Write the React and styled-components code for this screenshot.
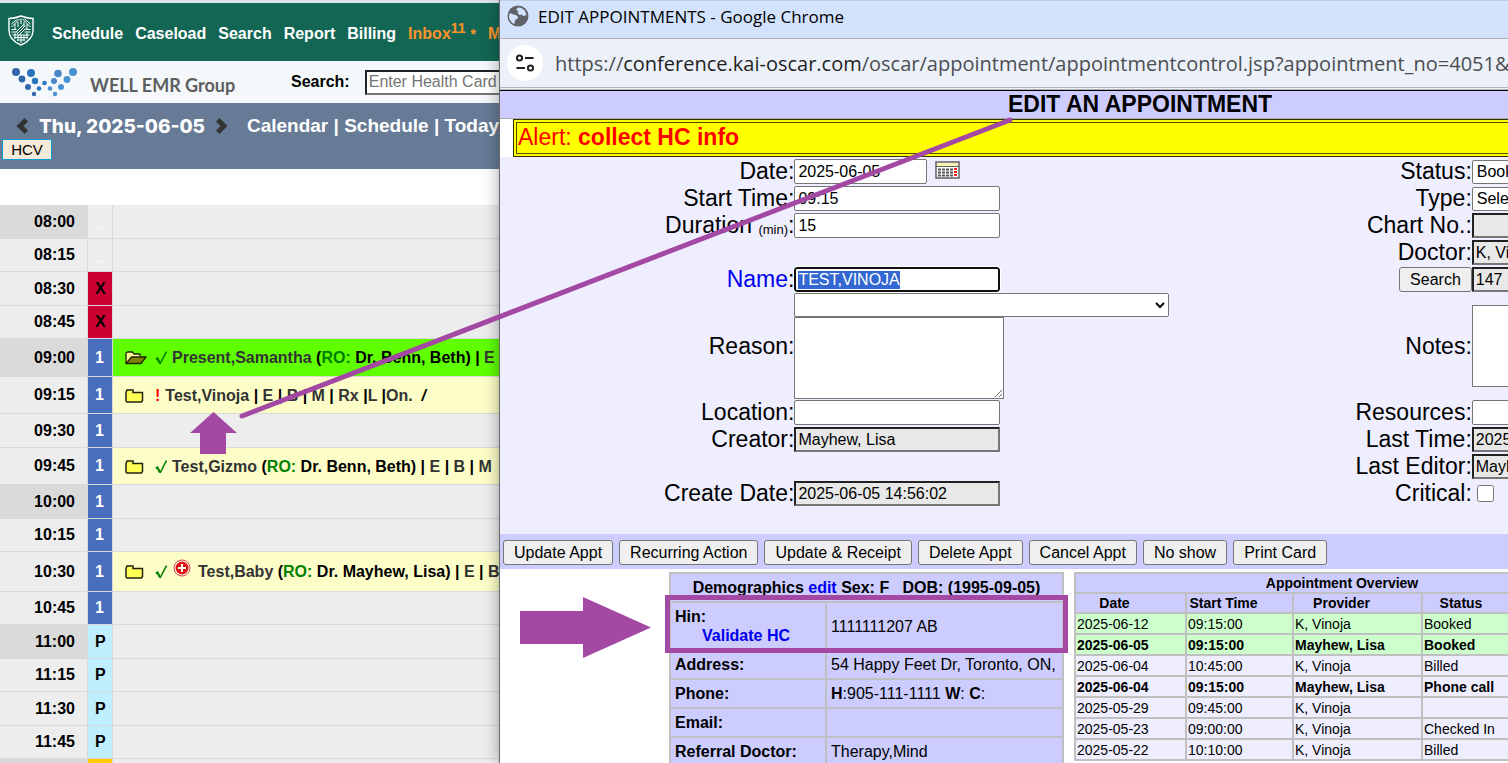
import React, { useEffect, useRef } from "react";
import styled, { createGlobalStyle, css } from "styled-components";

const GlobalStyle = createGlobalStyle`
   * {
      box-sizing: border-box;
   }

   body {
      margin: 0;
      background-color: #ffffff;
      color: #000000;
      font-family: "Liberation Sans", Arial, sans-serif;
      font-size: 16px;
   }

   a {
      color: inherit;
      text-decoration: none;
   }

   input, select, textarea, button {
      font-family: inherit;
      font-size: 16px;
      margin: 0;
   }
`;

const Desktop = styled.div`
   position: relative;
   display: grid;
   grid-template-columns: 125fr 252fr;
   height: 100vh;
   overflow: hidden;
`;

const SchedulePane = styled.div`
   min-width: 0;
   overflow: hidden;
   white-space: nowrap;
   background-color: #ededed;
   border-top: 3px solid #dde3f0;
`;

const NavBar = styled.nav`
   display: flex;
   align-items: center;
   gap: 12px;
   height: 58px;
   padding: 4px 0 0 8px;
   background-color: #146654;
   color: #ffffff;
   font-weight: bold;

   svg {
      flex: none;
      margin: 0 6px 8px 0;
   }
`;

const NavAlert = styled.a`
   color: #ff9429;

   sup {
      font-size: 14px;
      line-height: 0;
   }

   small {
      font-size: 14px;
      margin-left: 5px;
   }
`;

const SearchBar = styled.div`
   display: flex;
   align-items: center;
   height: 42px;
   padding-left: 11px;
   background-color: #f4f8fb;

   svg {
      flex: none;
   }
`;

const BrandName = styled.span`
   flex: none;
   width: 213px;
   padding: 6px 0 0 12px;
   color: #5d5f61;
   font-family: Lato, sans-serif;
   font-size: 18px;
   font-weight: bold;
`;

const SearchLabel = styled.label`
   margin-right: 15px;
   font-weight: bold;
`;

const SearchInput = styled.input`
   flex: none;
   width: 190px;
   height: 25px;
   padding: 0 2px;
   border: 2px inset #767676;

   &::placeholder {
      color: #757575;
   }
`;

const DateBar = styled.div`
   height: 66px;
   padding: 11px 0 0 2px;
   background-color: #677b96;
   color: #ffffff;
   font-size: 19px;
   font-weight: bold;
`;

const DateRow = styled.div`
   display: flex;
   align-items: center;
   height: 24px;
   padding-left: 13px;

   svg {
      flex: none;
   }
`;

const CurrentDate = styled.span`
   padding: 0 10px;
   font-family: Inter, sans-serif;
   font-size: 19px;
   font-weight: 800;
`;

const DateLinks = styled.span`
   margin-left: 18px;
`;

const HcvButton = styled.button`
   display: block;
   width: 50px;
   height: 21px;
   margin-top: 1px;
   padding: 0;
   border: 1px solid #0f9ad0;
   background-color: #f4ead9;
   font-size: 15px;
   line-height: 18px;
`;

const DayTable = styled.table`
   width: 100%;
   margin-top: 36px;
   border-collapse: separate;
   border-spacing: 0;
   table-layout: fixed;
   font-weight: bold;
   box-shadow: 0 -36px 0 #ffffff;
`;

const SlotRow = styled.tr`
   height: ${props => props.$height}px;
`;

const TimeCell = styled.th`
   width: 88px;
   padding: 0 12px 0 0;
   border-right: 1px solid #d9d9d9;
   border-bottom: 1px solid #d9d9d9;
   background-color: ${props => (props.$hour ? "#dadada" : "#ededed")};
   text-align: right;
`;

const codeColors = {
   _: { background: "#ededed", color: "#ffffff" },
   X: { background: "#cc0033", color: "#000000" },
   1: { background: "#486ebd", color: "#ffffff" },
   P: { background: "#bfefff", color: "#000000" },
   L: { background: "#ffcc00", color: "#ffcc00" }
};

const CodeCell = styled.td`
   width: 25px;
   padding: 0 0 0 7px;
   border-right: 1px solid #d9d9d9;
   border-bottom: 1px solid #d9d9d9;
   background-color: ${props => codeColors[props.$code].background};
   color: ${props => codeColors[props.$code].color};
`;

const slotColors = {
   free: "#ededed",
   here: "#5fff00",
   booked: "#fdfec7"
};

const SlotCell = styled.td`
   padding: 0 0 0 12px;
   border-bottom: 1px solid #d9d9d9;
   background-color: ${props => slotColors[props.$kind]};
   overflow: hidden;
`;

const Appointment = styled.div`
   display: flex;
   align-items: center;
   padding-top: 1px;

   svg {
      flex: none;
   }
`;

const Marks = styled.span`
   display: flex;
   align-items: center;
   gap: 6px;
   margin: 0 5px 0 8px;
   color: #ff0000;
`;

const Patient = styled.a`
   color: #333333;
`;

const RosterTag = styled.span`
   color: #008000;
`;

const ChromeWindow = styled.section`
   position: relative;
   min-width: 0;
   overflow: hidden;
   clip-path: inset(0 0 0 -24px);
   background-color: #ffffff;
   border-top: 1px solid #c3cbe0;
   box-shadow: 0 0 0 1px #686868, 0 0 16px rgba(0, 0, 0, 0.4);
`;

const TitleBar = styled.header`
   display: flex;
   align-items: center;
   gap: 9px;
   height: 38px;
   padding: 0 0 7px 7px;
   border-bottom: 1px solid #b0b1b8;
   background-color: #d3e3fd;
   font-family: "Open Sans", sans-serif;
   font-size: 17px;
   white-space: nowrap;
`;

const AddressBar = styled.div`
   display: flex;
   align-items: center;
   gap: 12px;
   height: 51px;
   padding-left: 7px;
   border-bottom: 3px double #b4b6ba;
   background-color: #ecf1f9;
   font-family: "Open Sans", sans-serif;
   font-size: 20px;
   white-space: nowrap;
   color: #4b4e52;

   strong {
      color: #1f1f1f;
      font-weight: normal;
   }
`;

const SiteInfo = styled.button`
   display: flex;
   flex: none;
   align-items: center;
   justify-content: center;
   width: 36px;
   height: 36px;
   padding: 0;
   border: none;
   border-radius: 50%;
   background-color: #ffffff;
`;

const Document = styled.div`
   width: 127%;
   border-top: 1px solid #000000;
`;

const Headline = styled.h1`
   height: 28px;
   margin: 0;
   border-bottom: 1px solid #a9a9a9;
   background-color: #ccccff;
   font-size: 23px;
   line-height: 26px;
   text-align: center;
`;

const AlertBox = styled.div`
   margin-left: 13px;
   padding: 2px;
   border: 1px solid #303000;
   background-color: #ffff00;
   color: #ff0000;
   font-size: 23px;
   line-height: 28px;

   p {
      margin: 0;
      padding: 0 0 2px 1px;
      border: 1px solid #505000;
   }
`;

const FormArea = styled.form`
   display: grid;
   grid-template-columns: 53fr 47fr;
   padding: 1px 0 27px;
   background-color: #eeeeff;
`;

const FormColumn = styled.div`
   display: grid;
   grid-template-columns: ${props => props.$columns};
   grid-template-rows: repeat(5, 27px) 106px repeat(4, 27px);
`;

const FieldLabel = styled.div`
   display: flex;
   align-items: center;
   justify-content: flex-end;
   font-size: 23px;
   white-space: nowrap;

   small {
      padding-top: 7px;
      font-size: 13px;
   }

   a {
      color: #0000ee;
   }
`;

const Field = styled.div`
   display: flex;
   flex-direction: ${props => (props.$stack ? "column" : "row")};
   align-items: ${props => (props.$stack ? "flex-start" : "center")};

   svg {
      margin: 0 0 4px 8px;
   }
`;

const TextInput = styled.input`
   width: ${props => (props.$short ? 133 : 206)}px;
   height: 25px;
   padding: 0 3px;
   border: 1px solid #767676;
   border-radius: 2px;
   background-color: #ffffff;

   &:read-only {
      padding: 0 2px;
      border: 2px inset #767676;
      border-radius: 0;
      background-color: #e8e8e8;
   }

   &:focus {
      padding: 0 2px;
      border: 2px solid #101010;
      border-radius: 3px;
      outline: 1px solid #ffffff;
   }

   &::selection {
      background-color: #3367d1;
      color: #ffffff;
   }
`;

const SelectInput = styled.select`
   width: ${props => (props.$wide ? 375 : 160)}px;
   height: 24px;
   flex: none;
   padding: 0;
   border: 1px solid #767676;
   border-radius: 2px;
   background-color: #ffffff;
   color: #000000;
`;

const NoteArea = styled.textarea`
   width: 210px;
   height: 82px;
   border: 1px solid #767676;
`;

const CheckBox = styled.input`
   width: 17px;
   height: 17px;
   margin-left: 5px;
`;

const buttonLook = css`
   height: 25px;
   padding: 0 10px;
   border: 1px solid #767676;
   border-radius: 3px;
   background-color: #efefef;
   color: #000000;
   white-space: nowrap;
`;

const SearchButton = styled.button`
   ${buttonLook}
`;

const ActionBar = styled.div`
   display: flex;
   gap: 6px;
   height: 35px;
   padding: 6px 3px;
   background-color: #ccccff;
`;

const ActionButton = styled.button`
   ${buttonLook}
   flex: none;
`;

const Tables = styled.div`
   display: flex;
   align-items: flex-start;
   gap: 10px;
   padding: 3px 0 0 169px;
`;

const DemoTable = styled.table`
   flex: none;
   width: 395px;
   border-spacing: 2px;
   background-color: #c0c0c0;
   table-layout: fixed;
   white-space: nowrap;

   th,
   td {
      height: 27px;
      padding: 0 4px;
      background-color: #ccccff;
      text-align: left;
      line-height: 19px;
   }

   thead th {
      text-align: center;
      white-space: pre;
   }

   a {
      color: #0000ee;
   }
`;

const LabelCol = styled.col`
   width: 154px;
`;

const HinRow = styled.tr`
   th,
   td {
      height: 46px;
   }

   a {
      display: block;
      padding-left: 27px;
   }
`;

const OverviewTable = styled.table`
   flex: none;
   width: 536px;
   border-spacing: 2px;
   background-color: #c0c0c0;
   table-layout: fixed;
   font-size: 14px;

   th {
      height: 18px;
      padding: 0;
      background-color: #ccccff;
      line-height: 16px;
   }

   tr + tr th {
      padding-right: 32px;
      white-space: nowrap;
   }
`;

const OverviewCol = styled.col`
   width: ${props => props.$width}px;
`;

const OverviewRow = styled.tr`
   background-color: ${props => (props.$upcoming ? "#ccffcc" : "#eeeeff")};
   font-weight: ${props => (props.$own ? "bold" : "normal")};

   td {
      height: 19px;
      padding: 0 1px;
      line-height: 16px;
   }
`;

const Annotations = styled.svg`
   position: absolute;
   top: 0;
   left: 0;
   pointer-events: none;
`;

const slots = [
   { time: "08:00", code: "_", height: 34 },
   { time: "08:15", code: "_", height: 33 },
   { time: "08:30", code: "X", height: 34 },
   { time: "08:45", code: "X", height: 33 },
   {
      time: "09:00",
      code: "1",
      height: 38,
      kind: "here",
      patient: "Present,Samantha",
      doctor: "Dr. Benn, Beth",
      links: ["E"]
   },
   {
      time: "09:15",
      code: "1",
      height: 37,
      kind: "booked",
      patient: "Test,Vinoja",
      links: ["E", "B", "M", "Rx"],
      rest: true
   },
   { time: "09:30", code: "1", height: 34 },
   {
      time: "09:45",
      code: "1",
      height: 37,
      kind: "booked",
      patient: "Test,Gizmo",
      doctor: "Dr. Benn, Beth",
      links: ["E", "B", "M"]
   },
   { time: "10:00", code: "1", height: 34 },
   { time: "10:15", code: "1", height: 33 },
   {
      time: "10:30",
      code: "1",
      height: 40,
      kind: "booked",
      urgent: true,
      patient: "Test,Baby",
      doctor: "Dr. Mayhew, Lisa",
      links: ["E", "B"]
   },
   { time: "10:45", code: "1", height: 33 },
   { time: "11:00", code: "P", height: 34 },
   { time: "11:15", code: "P", height: 33 },
   { time: "11:30", code: "P", height: 34 },
   { time: "11:45", code: "P", height: 33 },
   { time: "12:00", code: "L", height: 34 }
];

const overview = [
   ["2025-06-12", "09:15:00", "K, Vinoja", "Booked"],
   ["2025-06-05", "09:15:00", "Mayhew, Lisa", "Booked"],
   ["2025-06-04", "10:45:00", "K, Vinoja", "Billed"],
   ["2025-06-04", "09:15:00", "Mayhew, Lisa", "Phone call"],
   ["2025-05-29", "09:45:00", "K, Vinoja", ""],
   ["2025-05-23", "09:00:00", "K, Vinoja", "Checked In"],
   ["2025-05-22", "10:10:00", "K, Vinoja", "Billed"]
];

const actions = [
   "Update Appt",
   "Recurring Action",
   "Update & Receipt",
   "Delete Appt",
   "Cancel Appt",
   "No show",
   "Print Card"
];

const brandDots = [
   [5, 5, 4, "#2f67ad"],
   [20, 6, 4, "#2a74bd"],
   [11, 12, 3.4, "#2f67ad"],
   [24, 14, 3.2, "#2a74bd"],
   [17, 20, 3, "#2f67ad"],
   [28, 21.5, 2.3, "#2a74bd"],
   [23, 27, 2.2, "#2f67ad"],
   [33.5, 16, 2.3, "#2a78c0"],
   [39, 21.5, 2.3, "#4a90d0"],
   [44, 27, 2.2, "#4a90d0"],
   [43, 14, 3, "#4a86c8"],
   [50, 20, 3, "#4a93d3"],
   [47, 6.5, 3.8, "#4a86c8"],
   [56, 12.5, 3.4, "#4a93d3"],
   [62, 5, 4, "#4a93d3"]
];

const Shield = () => (
   <svg width="26" height="31" viewBox="0 0 26 31" fill="none" stroke="#ffffff">
      <path
         d="M1 3.5C5 3.5 9 2.5 13 1c4 1.500 8 2.500 12 2.500v12C25 22 20 27 13 30 6 27 1 22 1 15.500Z"
         strokeWidth="1.400"
      />
      <path
         d="M3.500 9l6-5M3.500 12l8-8M22.500 9l-6-5M22.500 12l-8-8M13 3.500V9M10 7v5M16 7v5M7 9v5M19 9v5M3.500 14.500h5M17.500 14.500h5M3.500 17h6M16.500 17h6M4.500 20h17M6 22.500h14M9 25h8M8.500 16.500l7-7M9 19l8.500-8.500M10.500 20.500l7-7M13 20v8M10 20v6M16 20v6M7 18v6M19 18v6"
         strokeWidth="1"
      />
   </svg>
);

const BrandMark = () => (
   <svg width="67" height="30" viewBox="0 0 67 30">
      {brandDots.map(([cx, cy, r, fill]) => (
         <circle key={`${cx}-${cy}`} cx={cx} cy={cy} r={r} fill={fill} />
      ))}
   </svg>
);

const Chevron = ({ next }) => (
   <svg width="14" height="18" viewBox="0 0 14 18">
      <path
         d={
            next
               ? "M1 4.500L4.500 1l8 8-8 8L1 13.500 5.500 9Z"
               : "M13 4.500L9.500 1l-8 8 8 8 3.500-3.500L8.500 9Z"
         }
         fill="#333333"
      />
   </svg>
);

const Folder = ({ open }) => (
   <svg width="22" height="14" viewBox="0 0 22 14">
      {open ? (
         <g stroke="#222200" strokeWidth="1.300" strokeLinejoin="round">
            <path d="M1 12.500V2L2.500 1h5L9 3h6v3" fill="#ffff99" />
            <path d="M1 12.500L6.500 6H21l-5 6.500Z" fill="#808000" />
         </g>
      ) : (
         <path
            d="M1 3.500L2 1h6v2.500h9.500v8L16.500 13H2L1 12Z"
            fill="#ffff55"
            stroke="#222211"
            strokeWidth="1.500"
         />
      )}
   </svg>
);

const Tick = () => (
   <svg width="12" height="14" viewBox="0 0 12 14" fill="none" stroke="#008000">
      <path d="M1 8.500l1.500-1 2.500 5" strokeWidth="2.200" />
      <path d="M5 13L11.500 .5" strokeWidth="1.600" />
   </svg>
);

const Urgent = () => (
   <svg width="20" height="26" viewBox="0 0 20 26">
      <circle cx="9" cy="9" r="8" fill="#ffffff" stroke="#e04040" />
      <circle cx="9" cy="9" r="6.500" fill="#e01414" />
      <path d="M9 5v8M5 9h8" stroke="#ffffff" strokeWidth="2" />
   </svg>
);

const Globe = () => (
   <svg width="22" height="22" viewBox="0 0 22 22">
      <circle cx="11" cy="11" r="10.500" fill="#5f6368" />
      <path
         d="M3 8c3 1 4 2 6 2l2 2c0 2-2 2-3 3l-.5 4C4 18 2 14 2 11ZM11 2.500c3 0 5 1 7 3.500l1.500 4-3 1-2-1.500-2 .5-2-2 1-2-2.500-1Z"
         fill="#d3e3fd"
      />
   </svg>
);

const Tune = () => (
   <svg width="20" height="18" viewBox="0 0 20 18" fill="none" stroke="#202124">
      <circle cx="4.500" cy="4" r="2.600" strokeWidth="2" />
      <circle cx="15.500" cy="14" r="2.600" strokeWidth="2" />
      <path d="M10 4h8.500M1.500 14H10" strokeWidth="2" />
   </svg>
);

const CalendarIcon = () => (
   <svg width="25" height="18" viewBox="0 0 25 18">
      <rect x="1" y="1" width="23" height="16" fill="#ffffff" stroke="#606060" strokeWidth="1.500" />
      <path d="M2 3.500h21" stroke="#f6f3b4" strokeWidth="3" />
      <path d="M1 5.500h23" stroke="#606060" />
      <path
         d="M3 8.500h16M3 11.500h16M3 14.500h16"
         stroke="#555555"
         strokeWidth="2"
         strokeDasharray="3 1"
      />
      <path d="M20.500 7v9" stroke="#ee2222" strokeWidth="3" strokeDasharray="2 1" />
   </svg>
);

const Slot = ({ slot }) => {
   const { time, code, height, kind, patient, doctor, links, rest, urgent } = slot;

   return (
      <SlotRow $height={height}>
         <TimeCell scope="row" $hour={time.endsWith(":00")}>
            {time}
         </TimeCell>
         <CodeCell $code={code}>{code}</CodeCell>
         <SlotCell $kind={kind || "free"}>
            {patient && (
               <Appointment>
                  <Folder open={kind === "here"} />
                  <Marks>
                     {rest ? "!" : <Tick />}
                     {urgent && <Urgent />}
                  </Marks>
                  <span>
                     <Patient href="#patient">{patient}</Patient>
                     {doctor && (
                        <>
                           {" "}
                           (<RosterTag>RO:</RosterTag> {doctor})
                        </>
                     )}
                     {links.map(link => (
                        <React.Fragment key={link}>
                           {" | "}
                           <Patient href={`#${link}`}>{link}</Patient>
                        </React.Fragment>
                     ))}
                     {rest && (
                        <>
                           {" |"}
                           <Patient href="#L">L</Patient>
                           {" |"}
                           <Patient href="#on">On.</Patient>
                           &nbsp; <em>/</em>
                        </>
                     )}
                  </span>
               </Appointment>
            )}
         </SlotCell>
      </SlotRow>
   );
};

const Schedule = () => (
   <SchedulePane>
      <NavBar>
         <Shield />
         <a href="#schedule">Schedule</a>
         <a href="#caseload">Caseload</a>
         <a href="#search">Search</a>
         <a href="#report">Report</a>
         <a href="#billing">Billing</a>
         <NavAlert href="#inbox">
            Inbox<sup>11</sup>
            <small>*</small>
         </NavAlert>
         <NavAlert href="#msg">M</NavAlert>
      </NavBar>
      <SearchBar>
         <BrandMark />
         <BrandName>WELL EMR Group</BrandName>
         <SearchLabel htmlFor="health-card">Search:</SearchLabel>
         <SearchInput id="health-card" placeholder="Enter Health Card" />
      </SearchBar>
      <DateBar>
         <DateRow>
            <Chevron />
            <CurrentDate>Thu, 2025-06-05</CurrentDate>
            <Chevron next />
            <DateLinks>
               <a href="#calendar">Calendar</a> | <a href="#day">Schedule</a> |{" "}
               <a href="#today">Today</a>
            </DateLinks>
         </DateRow>
         <HcvButton type="button">HCV</HcvButton>
      </DateBar>
      <DayTable>
         <tbody>
            {slots.map(slot => (
               <Slot key={slot.time} slot={slot} />
            ))}
         </tbody>
      </DayTable>
   </SchedulePane>
);

const AppointmentForm = () => {
   const nameInput = useRef(null);

   useEffect(() => {
      nameInput.current.focus();
      nameInput.current.select();
   }, []);

   return (
      <FormArea>
         <FormColumn $columns="23fr 30fr">
            <FieldLabel as="label" htmlFor="date">Date:</FieldLabel>
            <Field>
               <TextInput id="date" $short defaultValue="2025-06-05" />
               <CalendarIcon />
            </Field>
            <FieldLabel as="label" htmlFor="start">Start Time:</FieldLabel>
            <Field>
               <TextInput id="start" defaultValue="09:15" />
            </Field>
            <FieldLabel as="label" htmlFor="duration">
               Duration&nbsp;<small>(min)</small>:
            </FieldLabel>
            <Field>
               <TextInput id="duration" defaultValue="15" />
            </Field>
            <FieldLabel />
            <Field />
            <FieldLabel as="label" htmlFor="name">
               <a href="#name">Name</a>:
            </FieldLabel>
            <Field>
               <TextInput id="name" ref={nameInput} defaultValue="TEST,VINOJA" />
            </Field>
            <FieldLabel as="label" htmlFor="reason">Reason:</FieldLabel>
            <Field $stack>
               <SelectInput $wide aria-label="Reason code">
                  <option />
               </SelectInput>
               <NoteArea id="reason" />
            </Field>
            <FieldLabel as="label" htmlFor="location">Location:</FieldLabel>
            <Field>
               <TextInput id="location" />
            </Field>
            <FieldLabel as="label" htmlFor="creator">Creator:</FieldLabel>
            <Field>
               <TextInput id="creator" readOnly defaultValue="Mayhew, Lisa" />
            </Field>
            <FieldLabel />
            <Field />
            <FieldLabel as="label" htmlFor="created">Create Date:</FieldLabel>
            <Field>
               <TextInput id="created" readOnly defaultValue="2025-06-05 14:56:02" />
            </Field>
         </FormColumn>

         <FormColumn $columns="293fr 308fr">
            <FieldLabel as="label" htmlFor="status">Status:</FieldLabel>
            <Field>
               <SelectInput id="status">
                  <option>Booked</option>
               </SelectInput>
            </Field>
            <FieldLabel as="label" htmlFor="type">Type:</FieldLabel>
            <Field>
               <SelectInput id="type">
                  <option>Select type</option>
               </SelectInput>
            </Field>
            <FieldLabel as="label" htmlFor="chart">Chart No.:</FieldLabel>
            <Field>
               <TextInput id="chart" readOnly />
            </Field>
            <FieldLabel as="label" htmlFor="doctor">Doctor:</FieldLabel>
            <Field>
               <TextInput id="doctor" readOnly defaultValue="K, Vinoja" />
            </Field>
            <FieldLabel>
               <SearchButton type="button">Search</SearchButton>
            </FieldLabel>
            <Field>
               <TextInput aria-label="Demographic no." readOnly defaultValue="147" />
            </Field>
            <FieldLabel as="label" htmlFor="notes">Notes:</FieldLabel>
            <Field>
               <NoteArea id="notes" />
            </Field>
            <FieldLabel as="label" htmlFor="resources">Resources:</FieldLabel>
            <Field>
               <TextInput id="resources" />
            </Field>
            <FieldLabel as="label" htmlFor="last-time">Last Time:</FieldLabel>
            <Field>
               <TextInput id="last-time" readOnly defaultValue="2025-06-05 14:56:02" />
            </Field>
            <FieldLabel as="label" htmlFor="last-editor">Last Editor:</FieldLabel>
            <Field>
               <TextInput id="last-editor" readOnly defaultValue="Mayhew, Lisa" />
            </Field>
            <FieldLabel as="label" htmlFor="critical">Critical:</FieldLabel>
            <Field>
               <CheckBox id="critical" type="checkbox" />
            </Field>
         </FormColumn>
      </FormArea>
   );
};

const Demographics = () => (
   <DemoTable>
      <colgroup>
         <LabelCol />
         <col />
      </colgroup>
      <thead>
         <tr>
            <th colSpan={2}>
               Demographics <a href="#edit">edit</a> Sex: F   DOB: (1995-09-05)
            </th>
         </tr>
      </thead>
      <tbody>
         <HinRow>
            <th scope="row">
               Hin:<a href="#validate">Validate HC</a>
            </th>
            <td>1111111207 AB</td>
         </HinRow>
         <tr>
            <th scope="row">Address:</th>
            <td>54 Happy Feet Dr, Toronto, ON,</td>
         </tr>
         <tr>
            <th scope="row">Phone:</th>
            <td>
               <b>H</b>:905-111-1111 <b>W</b>: <b>C</b>:
            </td>
         </tr>
         <tr>
            <th scope="row">Email:</th>
            <td />
         </tr>
         <tr>
            <th scope="row">Referral Doctor:</th>
            <td>Therapy,Mind</td>
         </tr>
      </tbody>
   </DemoTable>
);

const Overview = () => (
   <OverviewTable>
      <colgroup>
         <OverviewCol $width={109} />
         <OverviewCol $width={105} />
         <OverviewCol $width={127} />
         <OverviewCol $width={108} />
         <col />
      </colgroup>
      <thead>
         <tr>
            <th colSpan={5}>Appointment Overview</th>
         </tr>
         <tr>
            <th>Date</th>
            <th>Start Time</th>
            <th>Provider</th>
            <th>Status</th>
            <th />
         </tr>
      </thead>
      <tbody>
         {overview.map(([date, start, provider, status]) => (
            <OverviewRow
               key={date + start}
               $upcoming={date >= "2025-06-05"}
               $own={provider === "Mayhew, Lisa"}
            >
               <td>{date}</td>
               <td>{start}</td>
               <td>{provider}</td>
               <td>{status}</td>
               <td />
            </OverviewRow>
         ))}
      </tbody>
   </OverviewTable>
);

const EditWindow = () => (
   <ChromeWindow>
      <TitleBar>
         <Globe />
         EDIT APPOINTMENTS - Google Chrome
      </TitleBar>
      <AddressBar>
         <SiteInfo type="button" aria-label="View site information">
            <Tune />
         </SiteInfo>
         <span>
            https://<strong>conference.kai-oscar.com</strong>
            /oscar/appointment/appointmentcontrol.jsp?appointment_no=4051&amp;
         </span>
      </AddressBar>
      <Document>
         <Headline>EDIT AN APPOINTMENT</Headline>
         <AlertBox>
            <p>
               Alert: <b>collect HC info</b>
            </p>
         </AlertBox>
         <AppointmentForm />
         <ActionBar>
            {actions.map(action => (
               <ActionButton key={action} type="button">
                  {action}
               </ActionButton>
            ))}
         </ActionBar>
         <Tables>
            <Demographics />
            <Overview />
         </Tables>
      </Document>
   </ChromeWindow>
);

const App = () => (
   <Desktop>
      <GlobalStyle />
      <Schedule />
      <EditWindow />
      <Annotations width="1508" height="763" fill="#a349a4">
         <path d="M242 416L1010 120" stroke="#a349a4" strokeWidth="5" strokeLinecap="round" />
         <path d="M213.500 412L237 433H226v21H200V433H190Z" />
         <path d="M520 611h63V597l68 30.500L583 658V644H520Z" />
         <rect x="667.500" y="597.500" width="398" height="53" fill="none" stroke="#a349a4" strokeWidth="5" />
      </Annotations>
   </Desktop>
);

export default App;
